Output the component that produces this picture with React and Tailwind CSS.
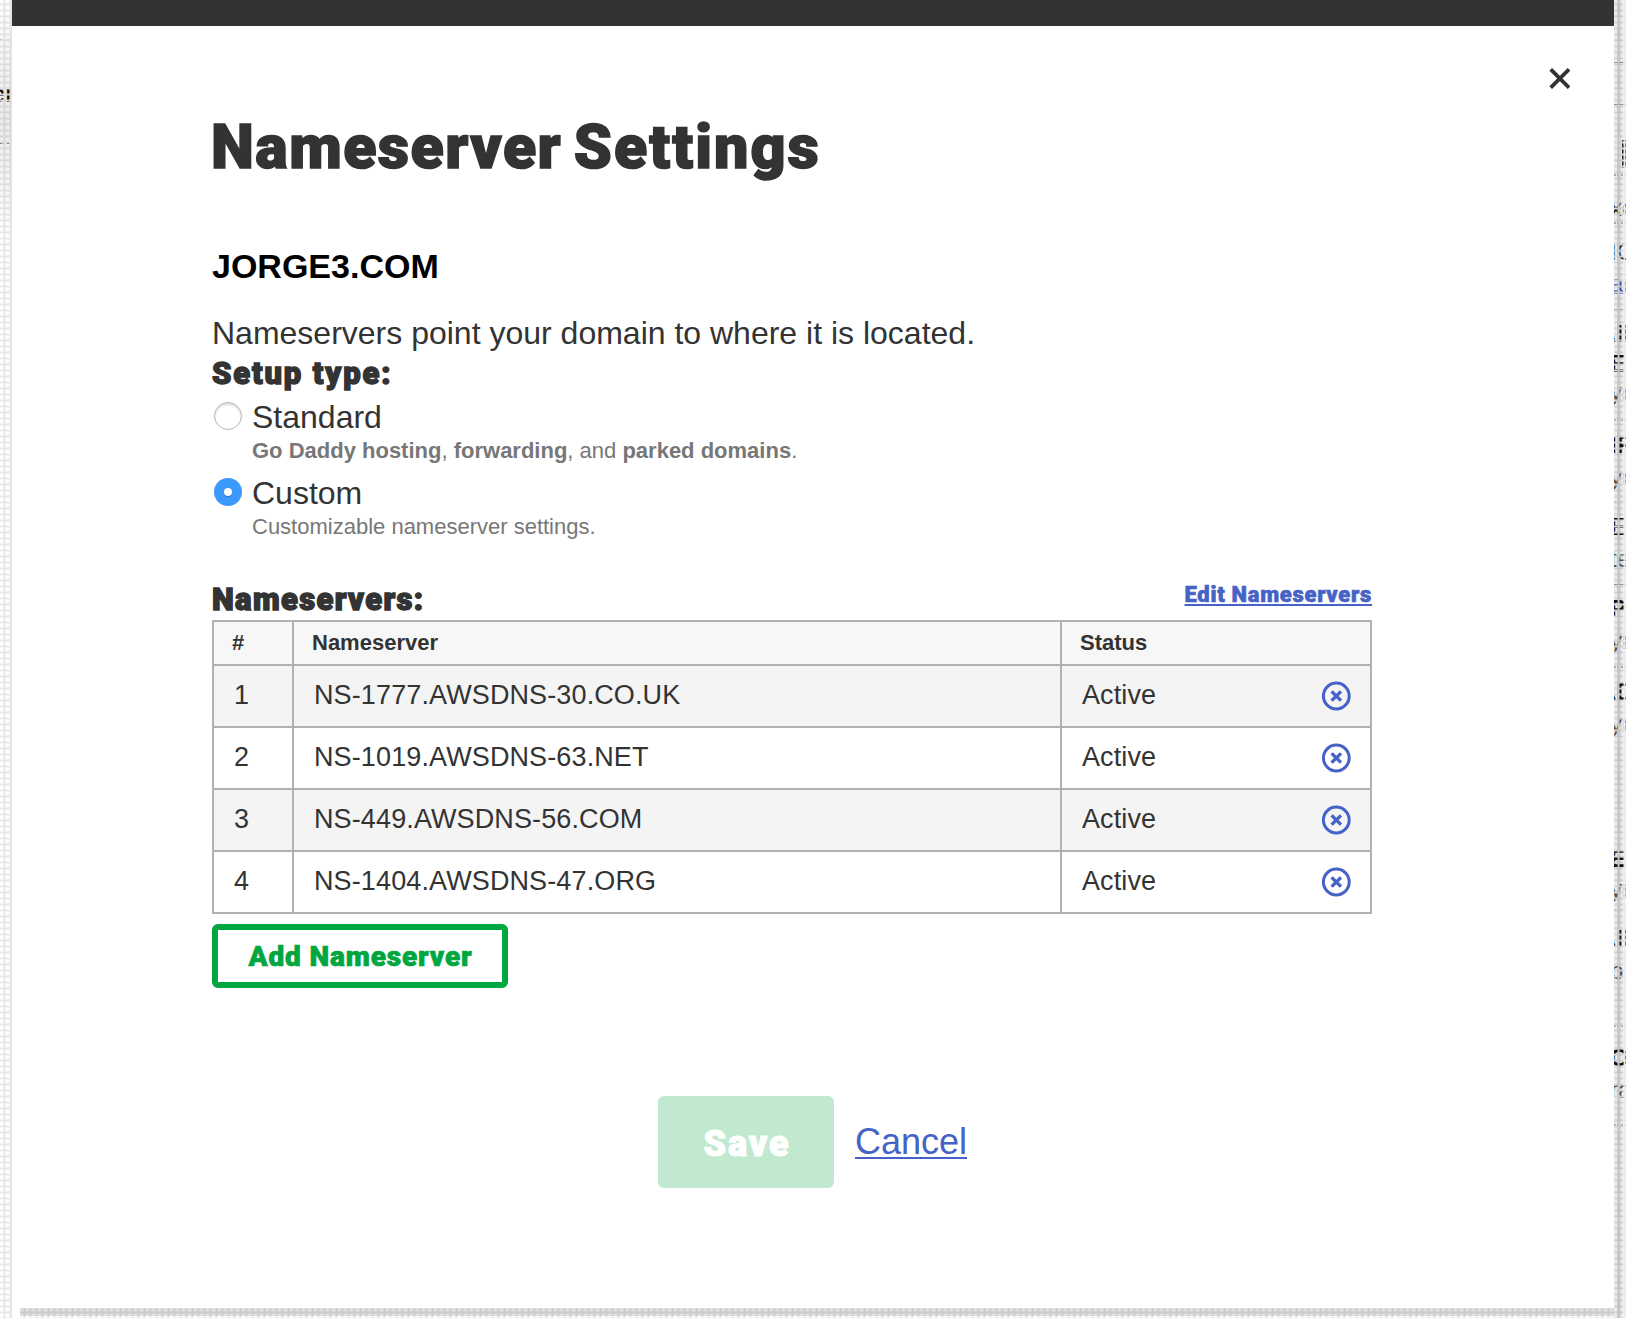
import React from "react";

const servers = [
  "NS-1777.AWSDNS-30.CO.UK",
  "NS-1019.AWSDNS-63.NET",
  "NS-449.AWSDNS-56.COM",
  "NS-1404.AWSDNS-47.ORG",
];

const rule = "border-b border-[#a0a0a0]";
const dots = "border-b-2 border-dotted border-[#bbbbbb]";
const bold = "font-bold text-[#111111]";
const thin = "text-[#555555]";

// Rows of the dimmed page that show past the right edge of the dialog.
const behind = [
  { h: "h-[63px]", c: rule },
  { h: "h-[42px]", c: rule },
  { h: "h-[35px]" },
  { h: "h-[28px]", c: "ml-2 bg-[#222222]" },
  { h: "h-[8px]", c: dots },
  { h: "h-[18px]" },
  { h: "h-[30px]", c: `text-[#111111] ${dots}`, t: "xo" },
  { h: "h-[14px]" },
  { h: "h-[26px]", c: "text-[#222222]", t: "IC" },
  { h: "h-[6px]" },
  { h: "h-[24px]", c: "text-[#4562c6] border-b-2 border-dashed border-[#4562c6]", t: "ar" },
  { h: "h-[16px]", c: rule },
  { h: "h-[10px]" },
  { h: "h-[30px]", c: bold, t: "AIL", far: true },
  { h: "h-[28px]", c: bold, t: "E" },
  { h: "h-[28px]", c: thin, t: "yr" },
  { h: "h-[15px]", c: dots },
  { h: "h-[10px]" },
  { h: "h-[32px]", c: bold, t: "IP" },
  { h: "h-[28px]", c: thin, t: "yr" },
  { h: "h-[12px]", c: dots },
  { h: "h-[10px]" },
  { h: "h-[32px]", c: bold, t: "EU" },
  { h: "h-[28px]", c: thin, t: "te" },
  { h: "h-[12px]", c: rule },
  { h: "h-[10px]" },
  { h: "h-[32px]", c: bold, t: "P" },
  { h: "h-[28px]", c: thin, t: "yr" },
  { h: "h-[13px]", c: dots },
  { h: "h-[10px]" },
  { h: "h-[32px]", c: bold, t: "AD", far: true },
  { h: "h-[24px]", c: thin, t: "yr" },
  { h: "h-[111px]" },
  { h: "h-[30px]", c: bold, t: "EP" },
  { h: "h-[24px]", c: thin, t: "yr" },
  { h: "h-[12px]", c: dots },
  { h: "h-[14px]" },
  { h: "h-[32px]", c: bold, t: "AIL", far: true },
  { h: "h-[28px]", c: thin, t: "p" },
  { h: "h-[42px]", c: dots },
  { h: "h-[17px]" },
  { h: "h-[32px]", c: bold, t: "OI" },
  { h: "h-[28px]", c: thin, t: "ra" },
  { h: "h-[22px]", c: dots },
];

function Mesh() {
  return (
    <div className="absolute inset-0 bg-[size:6px_6px] bg-[linear-gradient(90deg,transparent_3px,#e8e8e8_4px,#e8e8e8_5px,transparent_6px),linear-gradient(180deg,transparent_3px,#e8e8e8_4px,#e8e8e8_5px,transparent_6px)]" />
  );
}

function LeftStrip() {
  return (
    <div className="relative flex h-full w-3 shrink-0 flex-col overflow-hidden bg-white text-[24px] leading-none">
      <div className="h-[41px] shrink-0 border-b-2 border-dotted border-[#b0b0b0]" />
      <div className="h-[41px] shrink-0" />
      <div className="-ml-2 h-[30px] shrink-0 font-bold text-[#111111]">er</div>
      <div className="h-[32px] shrink-0 border-b-2 border-dotted border-[#222222]" />
      <Mesh />
      <div className="absolute inset-x-0 top-0 h-[240px] bg-linear-to-b from-transparent via-black/8 to-transparent" />
      <div className="absolute inset-y-0 right-0 w-px bg-[#e4e4e4]" />
    </div>
  );
}

function RightStrip() {
  return (
    <div className="relative flex h-full w-3 shrink-0 flex-col overflow-hidden bg-white">
      {behind.map((row, i) => (
        <div key={i} className={`shrink-0 text-[24px] leading-[28px] whitespace-nowrap ${row.h} ${row.c || ""}`}>
          {row.t ? <div className={row.far ? "-ml-[15px]" : "-ml-1"}>{row.t}</div> : null}
        </div>
      ))}
      <Mesh />
      <div className="absolute inset-y-0 left-0 w-[9px] bg-black/8" />
      <div className="absolute inset-y-0 left-[3px] w-[4px] bg-black/8" />
    </div>
  );
}

function RemoveIcon() {
  return (
    <svg viewBox="0 0 30 30" className="mt-[15px] mr-[19px] size-[30px]" fill="none" stroke="#4562c6">
      <circle cx="15.3" cy="15" r="12.9" strokeWidth="3" />
      <path d="M10.6 10.3 20 19.7M20 10.3 10.6 19.7" strokeWidth="3.3" />
    </svg>
  );
}

function Radio({ checked }) {
  return checked ? (
    <span className="mt-[3px] ml-0.5 flex size-7 items-center justify-center rounded-full bg-[#3b99fc]">
      <span className="size-2 rounded-full bg-white shadow-[0_1px_1px_rgba(0,0,0,0.25)]" />
    </span>
  ) : (
    <span className="mt-[3px] ml-0.5 size-7 rounded-full border border-[#b5b5b5] bg-white shadow-[inset_0_2px_2px_rgba(0,0,0,0.13)]" />
  );
}

function Option({ label, checked, children }) {
  return (
    <div className="flex h-[76px]">
      <Radio checked={checked} />
      <div className="ml-[10px]">
        <div className="text-[32px] leading-9">{label}</div>
        <div className="mt-0.5 text-[22px] leading-7 text-[#777777]">{children}</div>
      </div>
    </div>
  );
}

export default function App() {
  return (
    <div className="flex h-[1318px] w-[1626px] overflow-hidden bg-white font-['Liberation_Sans',Arial,sans-serif] text-[#333333]">
      <LeftStrip />
      <div className="flex w-[1602px] flex-col">
        <div className="h-[26px] shrink-0 bg-[#333333]" />
        <main className="relative h-[1282px] shrink-0 bg-white pt-[85px] pl-[200px]">
          <button className="absolute top-[42px] right-[44px] size-[21px]" aria-label="Close">
            <svg viewBox="0 0 21 21" className="size-[21px]" stroke="#333333" strokeWidth="3.8">
              <path d="M1.7 1.3 20.1 19.7M20.1 1.3 1.7 19.7" />
            </svg>
          </button>

          <h1 className="-ml-px font-['Roboto',sans-serif] text-[61px] leading-[72px] font-black tracking-[1.45px] [word-spacing:-5px] [-webkit-text-stroke:1.5px_#333333]">
            Nameserver <span className="tracking-[2px]">Settings</span>
          </h1>
          <h2 className="mt-[63px] text-[34px] leading-10 font-bold text-black">JORGE3.COM</h2>
          <p className="mt-[27px] text-[32px] leading-10">Nameservers point your domain to where it is located.</p>
          <h3 className="mt-[3px] mb-[7px] font-['Roboto',sans-serif] text-[31px] leading-9 font-black tracking-[1.85px] [-webkit-text-stroke:1.4px_#333333]">
            Setup type:
          </h3>

          <Option label="Standard">
            <b>Go Daddy hosting</b>, <b>forwarding</b>, and <b>parked domains</b>.
          </Option>
          <Option label="Custom" checked>
            Customizable nameserver settings.
          </Option>

          <div className="mt-[29px] flex h-10 w-[1160px] items-start justify-between font-['Roboto',sans-serif] font-black">
            <h3 className="mt-0.5 text-[31px] leading-9 tracking-[1.35px] [-webkit-text-stroke:1.4px_#333333]">Nameservers:</h3>
            <a className="mt-px text-[22px] leading-7 tracking-[0.7px] text-[#4562c6] underline decoration-2 underline-offset-[2px] [-webkit-text-stroke:0.6px_#4562c6] [text-decoration-skip-ink:none]">
              Edit Nameservers
            </a>
          </div>

          <div className="w-[1160px] border-t-2 border-l-2 border-[#b1b1b1]">
            <div className="grid h-11 grid-cols-[80px_768px_310px] bg-[#f7f7f7] text-[22px] leading-7 font-bold">
              <div className="border-r-2 border-b-2 border-[#b1b1b1] pt-[7px] pl-[18px]">#</div>
              <div className="border-r-2 border-b-2 border-[#b1b1b1] pt-[7px] pl-[18px]">Nameserver</div>
              <div className="border-r-2 border-b-2 border-[#b1b1b1] pt-[7px] pl-[18px]">Status</div>
            </div>
            {servers.map((name, i) => (
              <div
                key={name}
                className="grid h-[62px] grid-cols-[80px_768px_310px] text-[27px] leading-9 odd:bg-white even:bg-[#f4f4f4]"
              >
                <div className="border-r-2 border-b-2 border-[#b1b1b1] pt-[11px] pl-5">{i + 1}</div>
                <div className="border-r-2 border-b-2 border-[#b1b1b1] pt-[11px] pl-5 tracking-[0.12px]">{name}</div>
                <div className="flex justify-between border-r-2 border-b-2 border-[#b1b1b1] pl-5">
                  <span className="pt-[11px] tracking-[0.1px]">Active</span>
                  <RemoveIcon />
                </div>
              </div>
            ))}
          </div>

          <button className="mt-[10px] flex h-16 w-[296px] items-center justify-center rounded-md border-[6px] border-[#00a63f] pt-px pl-px font-['Roboto',sans-serif] text-[28px] font-black tracking-[0.85px] text-[#00a63f] [-webkit-text-stroke:0.7px_#00a63f]">
            Add Nameserver
          </button>

          <div className="mt-[108px] ml-[446px] flex">
            <button className="flex h-[92px] w-44 items-center justify-center rounded-md bg-[#c1e9d0] pt-[3px] pl-0.5 font-['Roboto',sans-serif] text-[36px] font-black tracking-[1.9px] text-white [-webkit-text-stroke:1.1px_white]">
              Save
            </button>
            <a className="mt-6 ml-[21px] text-[36px] leading-[44px] text-[#4562c6] underline decoration-2 underline-offset-[3px] [text-decoration-skip-ink:none]">
              Cancel
            </a>
          </div>
        </main>
        <div className="relative ml-2 h-[10px] shrink-0 overflow-hidden bg-white">
          <Mesh />
          <div className="absolute inset-x-0 top-0 h-2 bg-black/12" />
        </div>
      </div>
      <RightStrip />
    </div>
  );
}
